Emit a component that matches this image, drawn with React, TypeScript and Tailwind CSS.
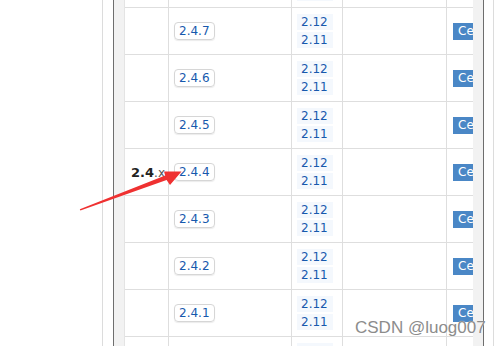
import React from "react";

const rows = ["2.4.7", "2.4.6", "2.4.5", "2.4.4", "2.4.3", "2.4.2", "2.4.1"];

function Row({ v }: { v: string }) {
  return (
    <div className="flex h-[47px] shrink-0 border-t border-[#dedede]">
      <div className="flex w-[44px] shrink-0 items-center justify-end border-r border-[#dedede] pr-[3px] pb-[1px]">
        {v === "2.4.4" && (
          <span className="whitespace-nowrap leading-none">
            <span className="text-[13px] font-bold text-[#222]">2.4</span>
            <span className="text-[12px] text-[#555]">.x</span>
          </span>
        )}
      </div>
      <div className="flex w-[123px] shrink-0 items-center border-r border-[#dedede] pl-[5px]">
        <span className="flex h-[18px] items-center rounded-[4px] border border-[#d6d6d6] px-[4px] text-[12px] leading-none text-[#1759ad] shadow-[0_1px_1px_rgba(0,0,0,0.08)]">
          {v}
        </span>
      </div>
      <div className="flex w-[51px] shrink-0 flex-col justify-center gap-[2px] border-r border-[#dedede] pl-[5px]">
        <span className="flex h-[16px] w-[36px] items-center bg-[#f4f8fd] pl-[4px] text-[12px] leading-none text-[#1759ad]">2.12</span>
        <span className="flex h-[16px] w-[36px] items-center bg-[#f4f8fd] pl-[4px] text-[12px] leading-none text-[#1759ad]">2.11</span>
      </div>
      <div className="w-[104px] shrink-0 border-r border-[#dedede]" />
      <div className="flex min-w-0 flex-1 items-center pl-[6px]">
        <span className="flex h-[17px] w-[20px] shrink-0 items-center whitespace-nowrap bg-[#4a87c6] pl-[5px] text-[12px] leading-none text-white">
          Ce
        </span>
      </div>
    </div>
  );
}

function EdgeRow({ top }: { top: boolean }) {
  return (
    <div className={`flex shrink-0 ${top ? "h-[7px]" : "h-[10px] border-t border-[#dedede]"}`}>
      <div className="w-[44px] shrink-0 border-r border-[#dedede]" />
      <div className="w-[123px] shrink-0 border-r border-[#dedede]" />
      <div className={`flex w-[51px] shrink-0 flex-col border-r border-[#dedede] pl-[5px] ${top ? "" : "pt-[6px]"}`}>
        <div className={`w-[36px] bg-[#f4f8fd] ${top ? "h-px" : "h-[4px]"}`} />
      </div>
      <div className="w-[104px] shrink-0 border-r border-[#dedede]" />
      <div className="flex-1" />
    </div>
  );
}

export default function App() {
  return (
    <div className="relative flex h-[346px] w-[501px] overflow-hidden bg-white font-['DejaVu_Sans',sans-serif]">
      <div className="w-[102px] shrink-0" />
      <div className="w-px shrink-0 bg-[#dcdcdc]" />
      <div className="w-[10px] shrink-0" />
      <div className="w-px shrink-0 bg-[#6e6e6e]" />
      <div className="w-[10px] shrink-0 bg-[#f2f2f2]" />
      <div className="w-px shrink-0 bg-[#e4e4e4]" />
      <div className="flex w-[348px] shrink-0 flex-col overflow-hidden">
        <EdgeRow top={true} />
        {rows.map((v) => (
          <Row key={v} v={v} />
        ))}
        <EdgeRow top={false} />
      </div>
      <div className="w-[10px] shrink-0 bg-[#f2f2f2]" />
      <div className="w-px shrink-0 bg-[#6e6e6e]" />
      <div className="w-[9px] shrink-0" />
      <div className="w-px shrink-0 bg-[#dcdcdc]" />
      <div className="flex-1" />

      <svg className="pointer-events-none absolute left-0 top-0" width="501" height="346" viewBox="0 0 501 346">
        <polygon
          points="79.8,209.2 165.2,175.6 164,171.4 181.5,171.5 170,185 166.6,179.9 80.4,210.4"
          fill="#ef3131"
        />
      </svg>

      <div className="pointer-events-none absolute left-[355px] top-[319px] whitespace-nowrap font-['Liberation_Sans',sans-serif] text-[17px] leading-[17px] text-[#8c8c8c] [text-shadow:0_0_1px_rgba(255,255,255,0.9)]">
        CSDN @luog007
      </div>
    </div>
  );
}
